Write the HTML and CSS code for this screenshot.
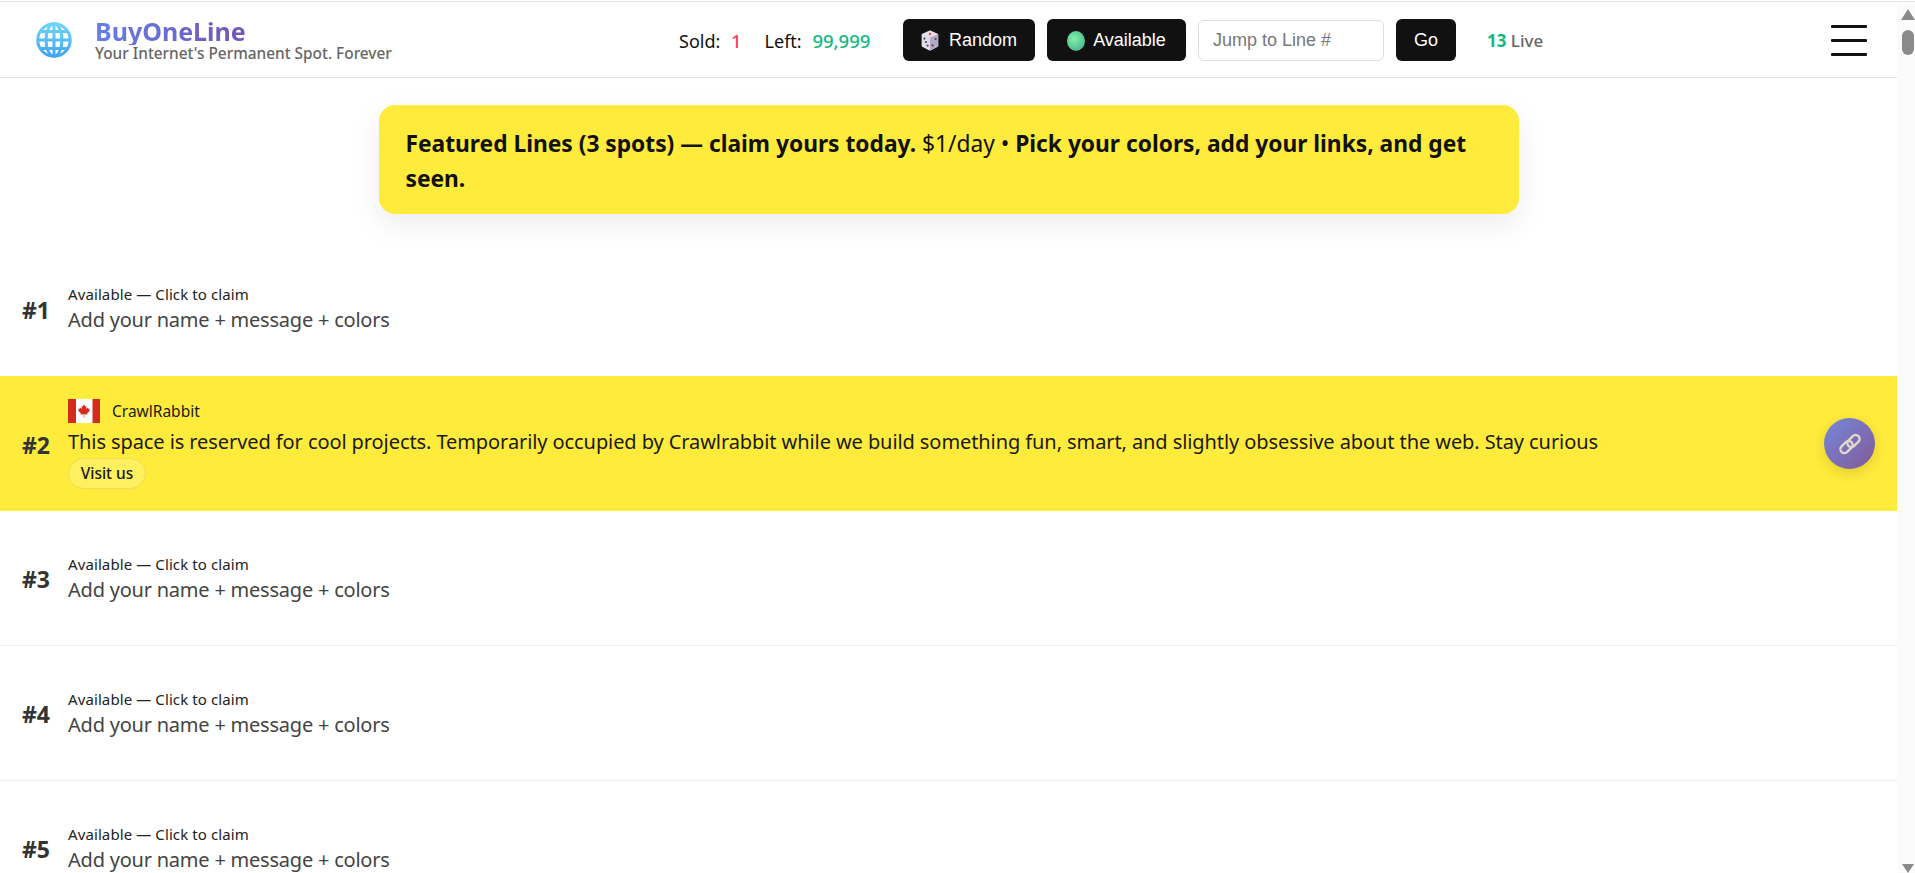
FILE: index.html
```html
<!DOCTYPE html>
<html lang="en">
<head>
<meta charset="utf-8">
<title>BuyOneLine</title>
<link rel="stylesheet" href="styles.css">
</head>
<body>
<div class="page">
  <div class="main">
    <header class="header">
      <a class="brand">
        <svg class="globe" viewBox="0 0 36 36" fill="none">
          <defs><linearGradient id="g" x1="0" y1="0" x2="0" y2="1"><stop offset="0" stop-color="#6dd5fa"/><stop offset="1" stop-color="#42a5f5"/></linearGradient></defs>
          <g stroke="url(#g)" stroke-width="3">
            <circle cx="18" cy="18" r="16.2"/>
            <ellipse cx="18" cy="18" rx="8" ry="16.2"/>
            <path d="M18 1.8V34.2M1.8 18H34.2M4 9.5H32M4 26.5H32"/>
          </g>
        </svg>
        <span class="brand-text">
          <span class="brand-name">BuyOneLine</span>
          <span class="brand-tag">Your Internet's Permanent Spot. Forever</span>
        </span>
      </a>
      <div class="stats">
        <span class="stat">Sold: <b class="red">1</b></span>
        <span class="stat">Left: <b class="green">99,999</b></span>
      </div>
      <button class="btn btn-random">
        <svg class="dice" viewBox="0 0 18 21">
          <path d="M9 1.5 16.2 4.6V15.9L9 19.5 1.8 15.9V4.6Z" fill="#e6e0ea" stroke="#e6e0ea" stroke-width="2" stroke-linejoin="round"/>
          <path d="M9 7.6V20.5L1.2 16.5Q.8 16.2 .8 15.8V4Z" fill="#e2dbe8"/>
          <path d="M9 7.6V20.5L16.8 16.5Q17.2 16.2 17.2 15.8V4Z" fill="#b5aac4"/>
          <circle cx="9" cy="4" r="1.2" fill="#e5484d"/>
          <g fill="#4b4266"><circle cx="3.4" cy="8.6" r="1.1"/><circle cx="5" cy="12" r="1.1"/><circle cx="6.6" cy="15.6" r="1.1"/><circle cx="11.6" cy="15.4" r="1.1"/><circle cx="14.6" cy="9" r="1.1"/></g>
        </svg>
        Random
      </button>
      <button class="btn btn-available"><span class="dot"></span>Available</button>
      <input class="jump" type="text" placeholder="Jump to Line #">
      <button class="btn btn-go">Go</button>
      <span class="live"><b class="green">13</b> Live</span>
      <div class="burger"><span></span><span></span><span></span></div>
    </header>

    <section class="banner-wrap">
      <div class="banner"><b>Featured Lines (3 spots) — claim yours today.</b> $1/day • <b>Pick your colors, add your links, and get seen.</b></div>
    </section>

    <section class="lines">
      <article class="line line-first">
        <div class="num">#1</div>
        <div class="body">
          <div class="label">Available — Click to claim</div>
          <div class="msg">Add your name + message + colors</div>
        </div>
      </article>
      <article class="line line-featured">
        <div class="num">#2</div>
        <div class="body">
          <div class="owner">
            <svg class="flag" viewBox="0 0 32 24">
              <rect width="32" height="24" fill="#fff"/>
              <rect width="8" height="24" fill="#d52b1e"/>
              <rect x="24.5" width="7.5" height="24" fill="#d52b1e"/>
              <path transform="translate(2.9 2) scale(.82)" d="M16 4 17.4 6.8 19 6 18.4 9.8 20.4 8 21 9.4 23 9 22.3 11.4 23.2 12 19.8 15 20.4 16.6 16.4 16.2V20H15.6V16.2L11.6 16.6 12.2 15 8.8 12 9.7 11.4 9 9 11 9.4 11.6 8 13.6 9.8 13 6 14.6 6.8Z" fill="#d52b1e"/>
            </svg>
            <span class="owner-name">CrawlRabbit</span>
          </div>
          <div class="msg msg-dark">This space is reserved for cool projects. Temporarily occupied by Crawlrabbit while we build something fun, smart, and slightly obsessive about the web. Stay curious</div>
          <a class="visit">Visit us</a>
        </div>
        <div class="fab">
          <svg viewBox="0 0 24 24" fill="none" stroke="#dcd8dc" stroke-width="2.4">
            <rect x="8.5" y="5" width="14" height="8" rx="4" transform="rotate(-45 15.5 9)"/>
            <rect x="1.5" y="11" width="14" height="8" rx="4" transform="rotate(-45 8.5 15)"/>
          </svg>
        </div>
      </article>
      <article class="line">
        <div class="num">#3</div>
        <div class="body">
          <div class="label">Available — Click to claim</div>
          <div class="msg">Add your name + message + colors</div>
        </div>
      </article>
      <article class="line">
        <div class="num">#4</div>
        <div class="body">
          <div class="label">Available — Click to claim</div>
          <div class="msg">Add your name + message + colors</div>
        </div>
      </article>
      <article class="line">
        <div class="num">#5</div>
        <div class="body">
          <div class="label">Available — Click to claim</div>
          <div class="msg">Add your name + message + colors</div>
        </div>
      </article>
    </section>
  </div>
  <div class="scrollbar">
    <span class="arrow-up"></span>
    <span class="thumb"></span>
    <span class="spacer"></span>
    <span class="arrow-down"></span>
  </div>
</div>
</body>
</html>
```
FILE: styles.css
```css
* { box-sizing: border-box; }
html, body { margin: 0; height: 100%; overflow: hidden; background: #fff; }
body { font-family: "Noto Sans", "Open Sans", sans-serif; color: #111; }

.page { display: flex; height: 872px; margin-top: 1px; border-top: 1px solid #e5e5e5; }
.main { flex: 1; min-width: 0; overflow: hidden; }

.header {
  height: 76px;
  border-bottom: 1px solid #e2e2e2;
  display: flex;
  align-items: center;
  padding: 1px 0 0 36px;
  font-family: "Liberation Sans", Arial, sans-serif;
}
.brand { display: flex; align-items: center; gap: 23px; width: 643px; flex: none; }
.globe { width: 36px; height: 36px; flex: none; }
.brand-text { display: flex; flex-direction: column; font-family: "Noto Sans", sans-serif; }
.brand-name { font-size: 25px; line-height: 28px; font-weight: 700;
  background: linear-gradient(90deg, #667eea, #764ba2); -webkit-background-clip: text; background-clip: text; color: transparent; width: 196px; }
.brand-tag { font-size: 15.4px; line-height: 18px; color: #666; font-weight: 500; white-space: nowrap; }

.stats { display: flex; gap: 23px; width: 224px; flex: none; font: 400 18px "Noto Sans", sans-serif; color: #111; }
.stat b { font-weight: 500; font-size: 18.5px; margin-left: 6px; }
.red { color: #f43f5e; }
.green { color: #10b981; }

.btn {
  height: 42px;
  border: 0;
  border-radius: 6px;
  background: #111;
  color: #fff;
  font: 400 18px "Liberation Sans", Arial, sans-serif;
  display: flex;
  align-items: center;
  justify-content: center;
  gap: 8px;
  padding: 1px 0 0;
  flex: none;
}
.btn-random { width: 132px; gap: 10px; }
.btn-available { width: 139px; margin-left: 12px; }
.btn-go { width: 60px; margin-left: 12px; }
.dice { width: 18px; height: 21px; }
.dot { width: 18px; height: 20px; border-radius: 50%; background: radial-gradient(circle at 40% 40%, #7ff0a8, #3fa987); }
.jump {
  width: 186px;
  height: 41px;
  margin-left: 12px;
  border: 1px solid #ddd;
  border-radius: 6px;
  padding: 1px 14px 0;
  font: 400 18px "Liberation Sans", Arial, sans-serif;
  flex: none;
  background: #fff;
}
.jump::placeholder { color: #777; }
.live { margin-left: 31px; width: 344px; flex: none; font: 500 17px "Noto Sans", sans-serif; color: #666; }
.live b { font-weight: 700; }
.burger { width: 36px; height: 31px; display: flex; flex-direction: column; justify-content: space-between; flex: none; }
.burger span { height: 3px; background: #111; border-radius: 1px; }

.banner-wrap { padding-top: 27px; display: flex; justify-content: center; }
.banner {
  width: 1140px;
  height: 109px;
  background: #ffeb3b;
  border-radius: 16px;
  padding: 21px 27px;
  font-size: 22.75px;
  line-height: 35px;
  color: #111;
  box-shadow: 0 10px 30px rgba(0,0,0,.08);
}
.banner b { font-weight: 700; }

.lines { margin-top: 27px; }
.line {
  height: 135px;
  display: flex;
  align-items: center;
  padding-left: 22px;
  border-bottom: 1px solid #eee;
  position: relative;
  color: #333;
}
.line-first { border-bottom: 0; }
.num { width: 46px; flex: none; padding-top: 2px; font-size: 23px; font-weight: 700; color: #333; }
.body { min-width: 0; padding-top: 3px; }
.label { font-size: 15px; line-height: 19px; color: #222; letter-spacing: .1px; }
.msg { font-size: 20px; line-height: 31px; color: #444; letter-spacing: -.22px; white-space: nowrap; }
.msg-dark { color: #1a1a1a; line-height: 29px; margin-top: 4px; letter-spacing: -.085px; }
.line-featured { background: #ffeb3b; border-bottom: 0; }
.line-featured .body { padding-top: 0; }
.owner { display: flex; align-items: center; gap: 12px; }
.flag { width: 32px; height: 24px; flex: none; }
.owner-name { font-size: 15.5px; line-height: 22px; color: #1a1a1a; }
.visit {
  display: block;
  width: 78px;
  margin-top: 2px;
  height: 31px;
  line-height: 29px;
  text-align: center;
  border: 1px solid #f0dc55;
  border-radius: 16px;
  background: #fff05f;
  font-size: 15.5px;
  font-weight: 500;
  color: #1a1a1a;
}
.fab {
  position: absolute;
  left: 1824px;
  top: 42px;
  width: 51px;
  height: 51px;
  border-radius: 50%;
  background: linear-gradient(135deg, #667eea, #764ba2);
  opacity: .9;
  box-shadow: 0 4px 14px rgba(0,0,0,.15);
  display: flex;
  align-items: center;
  justify-content: center;
}
.fab svg { width: 24px; height: 24px; }

.scrollbar { width: 18px; flex: none; background: #fbfbfb; display: flex; flex-direction: column; align-items: flex-start; padding: 7px 0 0 5px; }
.arrow-up { width: 0; height: 0; margin-left: -1px; border: 7px solid transparent; border-top: 0; border-bottom: 11px solid #8a8a8a; }
.arrow-down { width: 0; height: 0; border: 6px solid transparent; border-bottom: 0; border-top: 9px solid #8a8a8a; }
.thumb { width: 12px; height: 25px; margin-top: 10px; border-radius: 6px; background: #8a8a8a; }
.spacer { flex: 1; }
```
